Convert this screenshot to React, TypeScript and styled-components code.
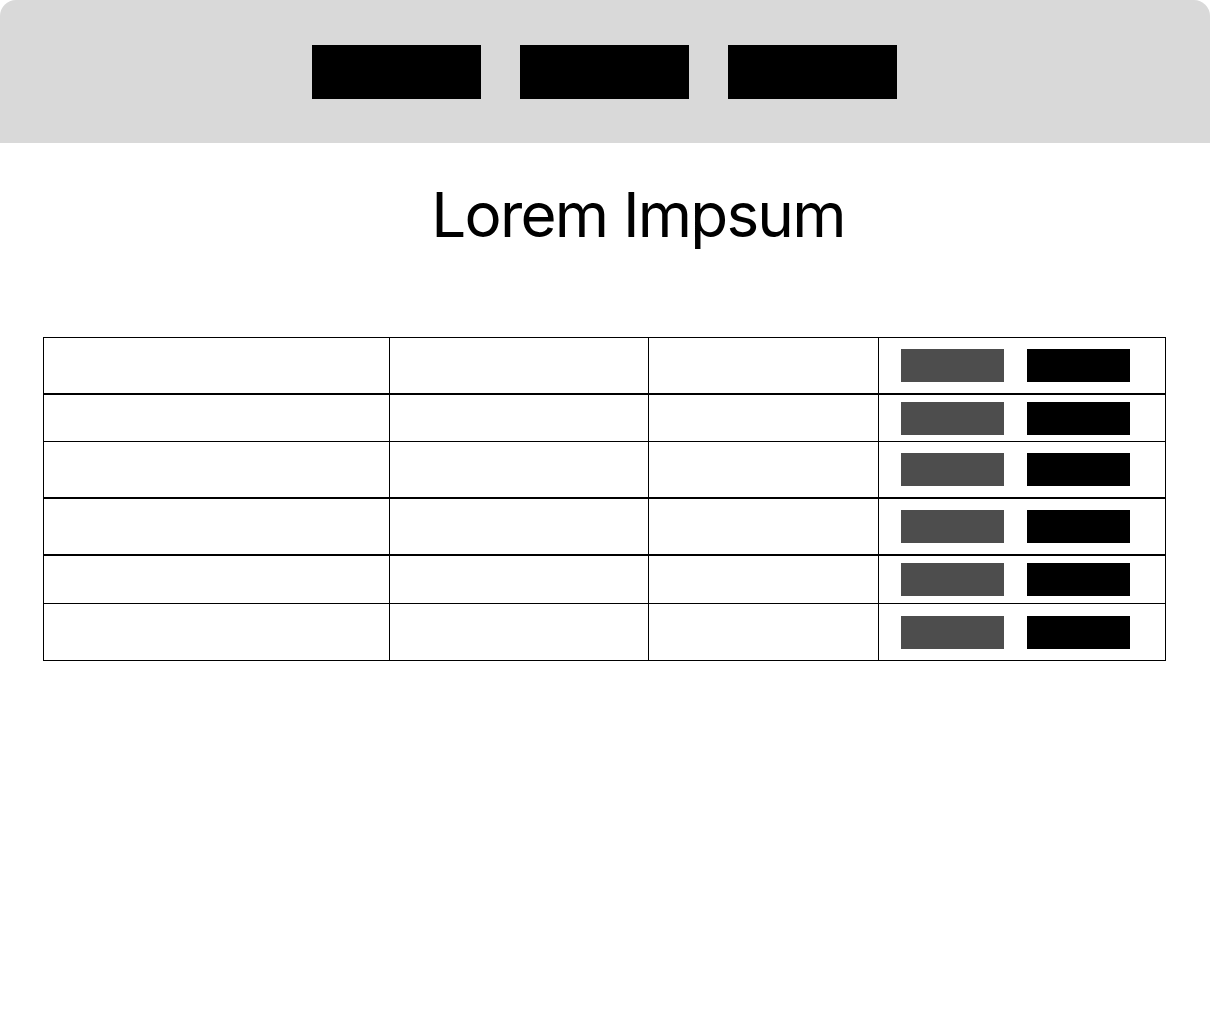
import React from "react";
import styled, { createGlobalStyle } from "styled-components";

const GlobalStyle = createGlobalStyle`
  html, body {
    margin: 0;
    padding: 0;
    background: #ffffff;
    font-family: Inter, "Liberation Sans", sans-serif;
  }
  * { box-sizing: border-box; }
`;

const Page = styled.div`
  width: 1210px;
  display: flex;
  flex-direction: column;
`;

const Header = styled.header`
  height: 143px;
  background: #d9d9d9;
  border-radius: 16px 16px 0 0;
  display: flex;
  justify-content: center;
  align-items: flex-start;
  padding: 45px 1px 0 0;
  gap: 39px;
`;

const NavButton = styled.button`
  width: 169px;
  height: 54px;
  background: #000000;
  border: none;
  padding: 0;
  margin: 0;
`;

const Title = styled.h1`
  margin: 34px 0 0;
  padding-left: 66px;
  text-align: center;
  font-family: Inter, "Liberation Sans", sans-serif;
  font-weight: 400;
  font-size: 62px;
  line-height: 76px;
  letter-spacing: -0.029em;
  color: #000000;
`;

const Table = styled.div`
  margin: 84px 0 0 43px;
  width: 1123px;
  border: 1px solid #000000;
  display: flex;
  flex-direction: column;
`;

const Row = styled.div<{ $h: number; $line: number }>`
  display: grid;
  grid-template-columns: 345px 259px 230px 287px;
  height: ${(p) => p.$h + p.$line}px;
  border-top: ${(p) => p.$line}px solid #000000;
`;

const Cell = styled.div`
  & + & {
    border-left: 1px solid #000000;
  }
`;

const ActionCell = styled(Cell)`
  display: flex;
  align-items: center;
  gap: 23px;
  padding-left: 22px;
`;

const ActionButton = styled.button<{ $dark?: boolean }>`
  width: 103px;
  height: 33px;
  border: none;
  padding: 0;
  margin: 0;
  background: ${(p) => (p.$dark ? "#000000" : "#4d4d4d")};
`;

const rows = [
  { h: 55, line: 0 },
  { h: 46, line: 2 },
  { h: 55, line: 1 },
  { h: 55, line: 2 },
  { h: 47, line: 2 },
  { h: 56, line: 1 },
];

export default function App() {
  return (
    <>
      <GlobalStyle />
      <Page>
        <Header>
          <NavButton aria-label="nav 1" />
          <NavButton aria-label="nav 2" />
          <NavButton aria-label="nav 3" />
        </Header>
        <Title>Lorem Impsum</Title>
        <Table>
          {rows.map((r, i) => (
            <Row key={i} $h={r.h} $line={r.line}>
              <Cell />
              <Cell />
              <Cell />
              <ActionCell>
                <ActionButton aria-label="edit" />
                <ActionButton $dark aria-label="delete" />
              </ActionCell>
            </Row>
          ))}
        </Table>
      </Page>
    </>
  );
}
